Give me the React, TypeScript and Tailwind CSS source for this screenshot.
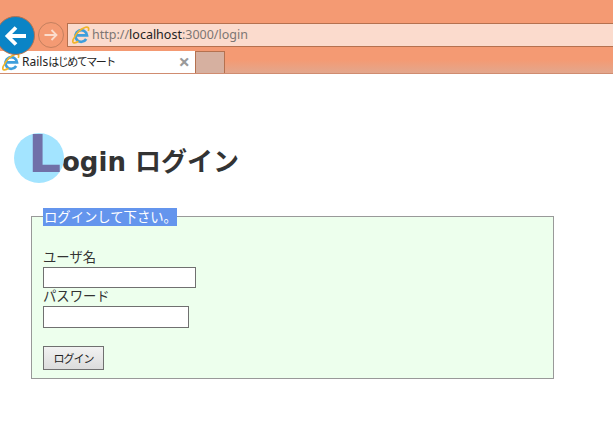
const JP = "font-['Noto_Sans','Noto_Sans_CJK_JP',sans-serif]";

function IeIcon({ size = 18 }: { size?: number }) {
  return (
    <svg width={size} height={size} viewBox="0 0 18 18" className="shrink-0">
      <path d="M14.200 13A5.800 5.800 0 1 1 15 9.300H4.500" fill="none" stroke="#3f9fdc" strokeWidth="2.700" />
      <path d="M1.500 13C4 7.500 9 2.800 13.500 1.300c2.800-.9 3.800 1 2.800 3.700" fill="none" stroke="#f0b429" strokeWidth="1.700" />
      <path d="M1.500 13C.2 15.500.8 17 2.600 16.800c1.400-.1 2.800-.8 3.800-1.500" fill="none" stroke="#f0b429" strokeWidth="1.700" />
    </svg>
  );
}

function BrowserBar() {
  return (
    <header className={`h-[74px] flex flex-col bg-[linear-gradient(#f49a73_0%,#f49a73_82%,#e3a78d_100%)] border-b border-[#d08c70] ${JP}`}>
      <div className="h-[51px] flex items-start pt-[16px] shrink-0">
        <div className="relative z-10 -ml-[4px] w-[39px] h-[39px] rounded-full bg-[#0a84c6] border border-[#b5714f] flex items-center justify-center shrink-0">
          <svg width="24" height="22" viewBox="0 0 24 22">
            <path d="M22 11H4M12 2.500L3.500 11l8.500 8.500" fill="none" stroke="#ffffff" strokeWidth="3.800" />
          </svg>
        </div>
        <div className="ml-[3px] mt-[6px] w-[26px] h-[26px] rounded-full border border-[#c4805f] bg-[#f49a73] flex items-center justify-center shrink-0">
          <svg width="16" height="14" viewBox="0 0 16 14">
            <path d="M1.500 7h12M8.500 2L13.500 7l-5 5" fill="none" stroke="#fbdccd" strokeWidth="1.800" />
          </svg>
        </div>
        <div className="ml-[3px] mt-[7px] flex-1 h-[24px] bg-[#fbdbcd] border-y border-l border-[#b5714f] flex items-center pl-[4px] text-[12.5px] text-[#7d7673]">
          <IeIcon />
          <span className="ml-[2px]">http://<span className="text-[#222222]">localhost</span>:3000/login</span>
        </div>
      </div>
      <div className="flex h-[22px]">
        <div className="w-[195px] bg-white flex items-center pl-[2px] pr-[5px] text-[12px] text-[#222222]">
          <IeIcon />
          <span className="ml-[2px] flex-1">Rails<span className="text-[11px] tracking-[-1.500px]">はじめてマート</span></span>
          <span className="text-[#9a9a9a] text-[20px] font-bold leading-none">×</span>
        </div>
        <div className="w-[30px] bg-[#d6b0a0] border-x border-t border-[#b5714f]" />
      </div>
    </header>
  );
}

export default function App() {
  return (
    <div className="w-[613px] h-[425px] overflow-hidden bg-white">
      <BrowserBar />
      <main className={`pl-[14px] pt-[59px] text-[13.33px] text-[#333333] ${JP}`}>
        <h1 className="flex items-end h-[50px] font-bold text-[26px] leading-[32px] text-[#333333] font-['DejaVu_Sans','Noto_Sans_CJK_JP',sans-serif]">
          <span className="relative w-[50px] h-[50px] shrink-0 rounded-full bg-[#a3e4ff]">
            <span className="absolute left-[14px] top-[-12px] text-[52px] leading-[66px] text-[#7070a8]">L</span>
          </span>
          <span className="-ml-[2px] mb-[5px]">ogin ログイン</span>
        </h1>
        <fieldset className="mt-[24px] ml-[17px] w-[523px] h-[172px] border border-[#999999] bg-[#edffed] pl-[11px]">
          <legend className="translate-y-px bg-[#6495ed] text-white w-[134px] h-[18px] leading-[18px] pl-[1px]">ログインして下さい。</legend>
          <div className="pt-[23px] leading-[19px]">
            <label className="block">ユーザ名</label>
            <input type="text" className="block w-[153px] h-[21px] bg-white border border-[#707070]" />
            <label className="block h-[18px] leading-[17px]">パスワード</label>
            <input type="password" className="block w-[146px] h-[22px] bg-white border border-[#707070]" />
            <button className="block mt-[18px] w-[61px] h-[24px] text-[11px] tracking-[-1px] text-[#222222] border border-[#707070] bg-[linear-gradient(#f2f2f2,#dcdcdc)]">ログイン</button>
          </div>
        </fieldset>
      </main>
    </div>
  );
}
